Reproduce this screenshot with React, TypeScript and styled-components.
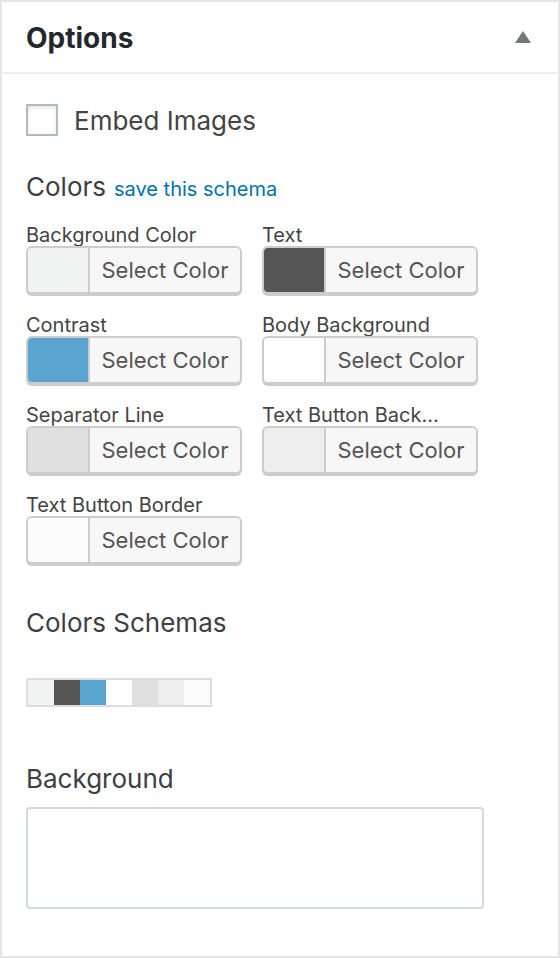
import React from "react";
import styled, { createGlobalStyle } from "styled-components";

const GlobalStyle = createGlobalStyle`
  html, body { margin: 0; padding: 0; background: #fff; }
  * { box-sizing: border-box; }
  body { font-family: Inter, "Liberation Sans", sans-serif; color: #444; }
`;

const Panel = styled.div`
  width: 560px;
  height: 958px;
  border: 2px solid #e5e5e5;
  background: #fff;
  display: flex;
  flex-direction: column;
`;

const Header = styled.div`
  height: 72px;
  border-bottom: 2px solid #eeeeee;
  display: flex;
  align-items: center;
  justify-content: space-between;
  padding: 2px 27px 0 24px;
`;

const Title = styled.h2`
  margin: 0;
  font-size: 28px;
  font-weight: 700;
  color: #23282d;
`;

const Toggle = styled.button`
  border: 0;
  background: none;
  padding: 0;
  width: 16px;
  height: 12px;
  display: flex;
  margin-top: -2px;
`;

const Body = styled.div`
  padding: 30px 24px 0 24px;
  display: flex;
  flex-direction: column;
`;

const CheckRow = styled.label`
  display: flex;
  align-items: center;
  gap: 16px;
  font-size: 26px;
  color: #444;
  height: 32px;
`;

const Box = styled.span`
  width: 32px;
  height: 32px;
  border: 2px solid #b4b9be;
  background: #fff;
  box-shadow: inset 0 2px 4px rgba(0, 0, 0, 0.1);
`;

const SectionTitle = styled.h3<{ $top: number; $bottom: number }>`
  margin: ${(p) => p.$top}px 0 ${(p) => p.$bottom}px;
  font-size: 26px;
  line-height: 30px;
  font-weight: 400;
  color: #3c4043;
  display: flex;
  align-items: baseline;
  gap: 8px;
`;

const SaveLink = styled.a`
  font-size: 20px;
  color: #0073aa;
  text-decoration: none;
`;

const Grid = styled.div`
  display: grid;
  grid-template-columns: 236px 236px;
  row-gap: 20px;
`;

const Field = styled.div`
  display: flex;
  flex-direction: column;
  min-width: 0;
`;

const FieldLabel = styled.div`
  font-size: 20px;
  line-height: 22px;
  color: #444;
  white-space: nowrap;
`;

const ColorButton = styled.button`
  display: flex;
  align-items: stretch;
  width: 216px;
  height: 48px;
  padding: 0;
  border: 2px solid #cccccc;
  border-radius: 6px;
  background: #f7f7f7;
  box-shadow: 0 2px 0 #cccccc;
  overflow: hidden;
  font-family: inherit;
`;

const Swatch = styled.span<{ $color: string }>`
  width: 60px;
  background: ${(p) => p.$color};
`;

const ButtonText = styled.span`
  flex: 1;
  border-left: 2px solid #cccccc;
  background: #f7f7f7;
  display: flex;
  align-items: center;
  justify-content: center;
  font-size: 22px;
  color: #555;
`;

const SchemaBar = styled.div`
  display: flex;
  width: 186px;
  border: 2px solid #dddddd;
  margin-bottom: 57px;
`;

const SchemaCell = styled.span<{ $color: string }>`
  width: 26px;
  height: 25px;
  background: ${(p) => p.$color};
`;

const TextArea = styled.textarea`
  width: 458px;
  height: 102px;
  border: 2px solid #d5d8dc;
  border-radius: 4px;
  background: #fff;
  resize: none;
  margin: 0;
  display: block;
`;

const fields = [
  { label: "Background Color", color: "#f1f2f2" },
  { label: "Text", color: "#555555" },
  { label: "Contrast", color: "#59a5cf" },
  { label: "Body Background", color: "#ffffff" },
  { label: "Separator Line", color: "#e0e0e0" },
  { label: "Text Button Back...", color: "#eeeeee" },
  { label: "Text Button Border", color: "#fcfcfc" },
];

const schema = ["#f1f2f2", "#555555", "#59a5cf", "#ffffff", "#e0e0e0", "#eeeeee", "#fcfcfc"];

export default function App() {
  return (
    <>
      <GlobalStyle />
      <Panel>
        <Header>
          <Title>Options</Title>
          <Toggle aria-label="Toggle panel">
            <svg width="16" height="12" viewBox="0 0 16 12">
              <path d="M8 0 L16 12 L0 12 Z" fill="#72777c" />
            </svg>
          </Toggle>
        </Header>
        <Body>
          <CheckRow>
            <Box />
            Embed Images
          </CheckRow>
          <SectionTitle $top={36} $bottom={20}>
            Colors <SaveLink href="#">save this schema</SaveLink>
          </SectionTitle>
          <Grid>
            {fields.map((f) => (
              <Field key={f.label}>
                <FieldLabel>{f.label}</FieldLabel>
                <ColorButton>
                  <Swatch $color={f.color} />
                  <ButtonText>Select Color</ButtonText>
                </ColorButton>
              </Field>
            ))}
          </Grid>
          <SectionTitle $top={44} $bottom={40}>Colors Schemas</SectionTitle>
          <SchemaBar>
            {schema.map((c, i) => (
              <SchemaCell key={i} $color={c} />
            ))}
          </SchemaBar>
          <SectionTitle $top={0} $bottom={13}>Background</SectionTitle>
          <TextArea />
        </Body>
      </Panel>
    </>
  );
}
